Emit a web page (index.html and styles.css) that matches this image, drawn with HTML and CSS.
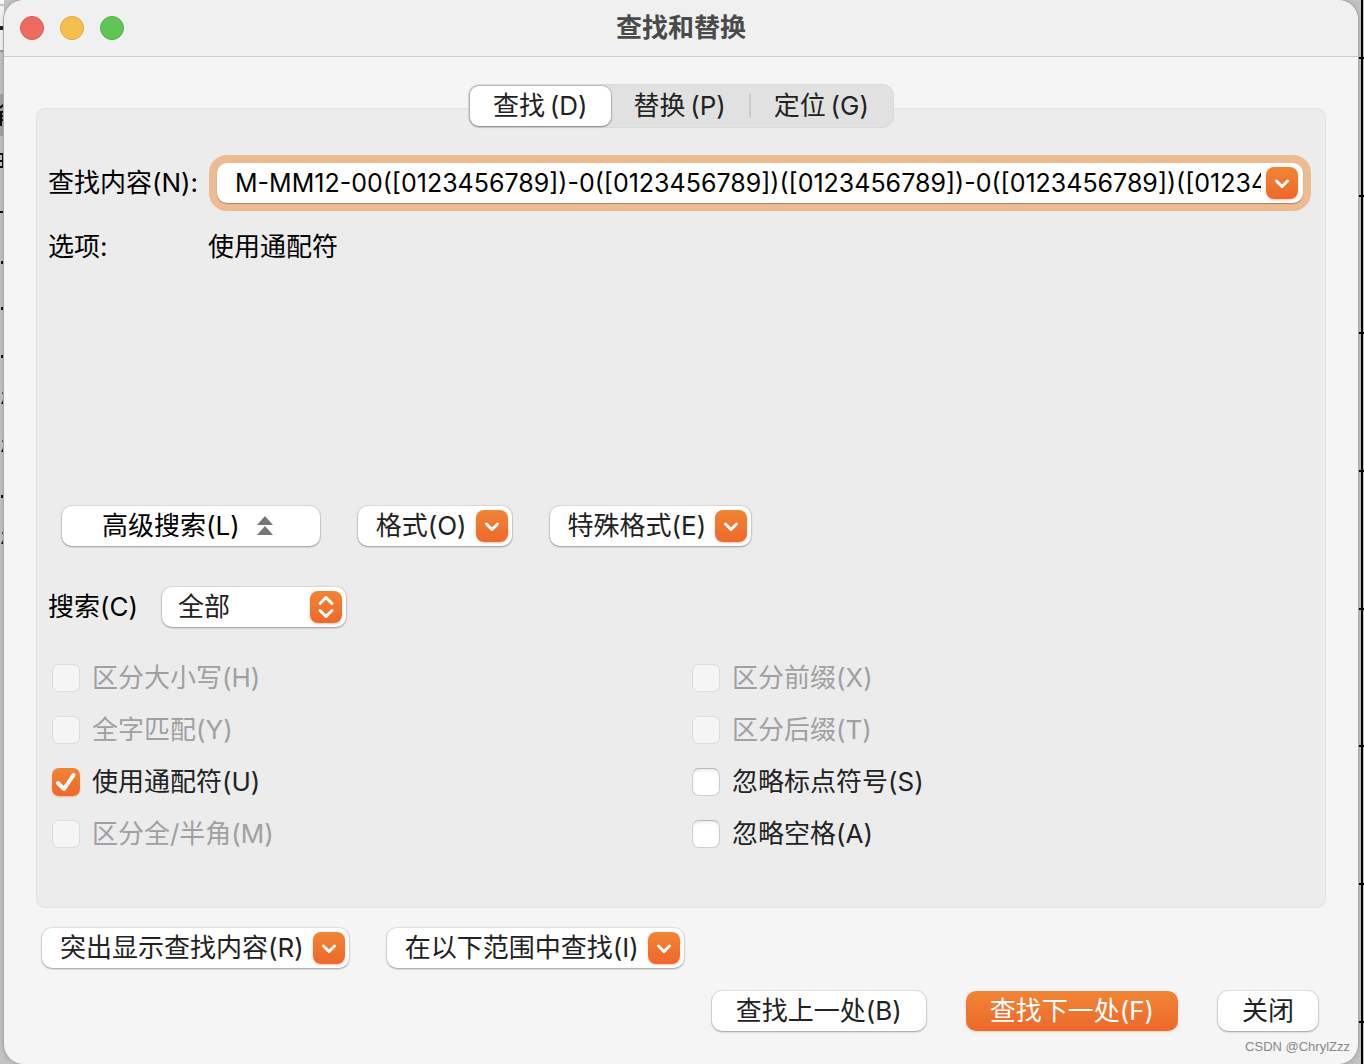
FILE: index.html
```html
<!DOCTYPE html>
<html lang="zh-CN">
    <head>
        <meta charset="UTF-8">
        <meta name="viewport" content="width=device-width, initial-scale=1.0">
        <title>查找和替换</title>
        <link rel="stylesheet" href="styles.css">
    </head>
    <body>
        <!-- Document behind the dialog -->
        <svg class="doc doc-left" width="4" height="1064" aria-hidden="true">
            <rect width="4" height="52" fill="#f4f4f4"/>
            <rect y="4" width="4" height="2" fill="#c8c8c8"/>
            <rect y="26" width="4" height="4" fill="#222"/>
            <rect y="50" width="4" height="2" fill="#999"/>
            <rect y="94" width="4" height="42" fill="#a3a3a3"/>
            <path d="M0 108l3-3M0 112h4M0 116h4M1 112v14M0 120h4M0 154h4M0 161h4M0 167h4M3 154v13M0 212h4" stroke="#111" stroke-width="2" fill="none"/>
            <path d="M1 261h3v3h-3zM1 307h3v3h-3zM1 355h3v3h-3zM1 495h3v3h-3zM4 388v6h-2zM4 398v6h-3zM4 436v6h-2zM4 446v6h-3zM4 528v6h-2zM4 538v6h-3z" fill="#111"/>
        </svg>
        <svg class="doc doc-right" width="6" height="1064" aria-hidden="true">
            <path d="M4 0v1064" stroke="#000" stroke-width="2"/>
            <path d="M0 58h6M0 196h6M0 333h6M0 471h6M0 609h6M0 746h6M0 884h6M0 1022h6" stroke="#000" stroke-width="2"/>
        </svg>

        <main class="dialog">
            <header class="titlebar">
                <div class="lights">
                    <button class="light red" aria-label="关闭窗口"></button>
                    <button class="light yellow" aria-label="最小化"></button>
                    <button class="light green" aria-label="缩放"></button>
                </div>
                <h1>查找和替换</h1>
            </header>

            <div class="content">
                <nav class="tabs" role="tablist">
                    <button class="tab active" role="tab" aria-selected="true">查找&thinsp;(D)</button>
                    <button class="tab" role="tab" aria-selected="false">替换&thinsp;(P)</button>
                    <span class="divider"></span>
                    <button class="tab" role="tab" aria-selected="false">定位&thinsp;(G)</button>
                </nav>

                <section class="panel">
                    <div class="row">
                        <label for="find">查找内容(N):</label>
                        <div class="combo">
                            <input id="find" type="text" value="M-MM12-00([0123456789])-0([0123456789])([0123456789])-0([0123456789])([0123456789])">
                            <button class="badge" aria-label="历史记录">
                                <svg width="32" height="32" viewBox="0 0 32 32"><path d="M10.5 14l5.5 5.5 5.5-5.500"/></svg>
                            </button>
                        </div>
                    </div>
                    <div class="row options">
                        <span>选项:</span>
                        <span>使用通配符</span>
                    </div>

                    <div class="buttons tools">
                        <button class="btn advanced">高级搜索(L)
                            <svg width="16" height="20" viewBox="0 0 16 20"><path d="M8 0l8 9H0zM8 10l8 9H0z" fill="#777"/></svg>
                        </button>
                        <button class="btn menu">格式(O)
                            <span class="badge"><svg width="32" height="32" viewBox="0 0 32 32"><path d="M10.5 14l5.5 5.5 5.5-5.5"/></svg></span>
                        </button>
                        <button class="btn menu">特殊格式(E)
                            <span class="badge"><svg width="32" height="32" viewBox="0 0 32 32"><path d="M10.5 14l5.5 5.5 5.5-5.5"/></svg></span>
                        </button>
                    </div>

                    <div class="scope">
                        <label for="scope">搜索(C)</label>
                        <div class="select">
                            <select id="scope">
                                <option>全部</option>
                            </select>
                            <span class="badge"><svg width="32" height="32" viewBox="0 0 32 32"><path d="M10 12.5l6-6 6 6M10 19.5l6 6 6-6"/></svg></span>
                        </div>
                    </div>

                    <div class="checks">
                        <label><input type="checkbox" disabled>区分大小写(H)</label>
                        <label><input type="checkbox" disabled>区分前缀(X)</label>
                        <label><input type="checkbox" disabled>全字匹配(Y)</label>
                        <label><input type="checkbox" disabled>区分后缀(T)</label>
                        <label><input type="checkbox" checked>使用通配符(U)
                            <svg class="tick" width="28" height="28" viewBox="0 0 28 28"><path d="M6 15l6 6L21.5 7"/></svg>
                        </label>
                        <label><input type="checkbox">忽略标点符号(S)</label>
                        <label><input type="checkbox" disabled>区分全/半角(M)</label>
                        <label><input type="checkbox">忽略空格(A)</label>
                    </div>
                </section>

                <div class="buttons extra">
                    <button class="btn menu">突出显示查找内容(R)
                        <span class="badge"><svg width="32" height="32" viewBox="0 0 32 32"><path d="M10.5 14l5.5 5.5 5.5-5.5"/></svg></span>
                    </button>
                    <button class="btn menu">在以下范围中查找(I)
                        <span class="badge"><svg width="32" height="32" viewBox="0 0 32 32"><path d="M10.5 14l5.5 5.5 5.5-5.5"/></svg></span>
                    </button>
                </div>

                <footer class="buttons actions">
                    <button class="btn">查找上一处(B)</button>
                    <button class="btn primary">查找下一处(F)</button>
                    <button class="btn">关闭</button>
                </footer>
            </div>
        </main>
        <p class="credit">CSDN @ChrylZzz</p>
    </body>
</html>
```
FILE: styles.css
```css
* {
    box-sizing: border-box;
}

body {
    position: relative;
    margin: 0;
    min-height: 100vh;
    padding: 0 6px 0 4px;
    background: #c4c4c4;
    font-family: Inter, "Noto Sans CJK SC", sans-serif;
    font-size: 26px;
    line-height: 32px;
    color: #000;
    overflow: hidden;
}

button, input, select {
    margin: 0;
    padding: 0;
    border: none;
    font: inherit;
    color: #222;
}

.doc {
    position: absolute;
    top: 0;
}

.doc-left {
    left: 0;
}

.doc-right {
    right: 0;
}

.dialog {
    position: relative;
    min-height: 100vh;
    border-radius: 20px;
    background: #f5f5f5;
    box-shadow: 0 0 0 1px #a8a8a8, 0 0 6px rgba(0,0,0,0.2);
    overflow: hidden;
}

.titlebar {
    position: relative;
    display: flex;
    align-items: center;
    justify-content: center;
    height: 57px;
    border-bottom: 1px solid #cdcdcd;
    background: #f0f0f0;
}

.titlebar h1 {
    margin: 0;
    font-size: 26px;
    font-weight: bold;
    color: #4a4a4a;
}

.lights {
    position: absolute;
    left: 16px;
    top: 16px;
    display: flex;
    gap: 16px;
}

.light {
    width: 24px;
    height: 24px;
    border-radius: 50%;
}

.red {
    background: #ed6a5f;
    border: 1px solid #d85a50;
}

.yellow {
    background: #f5bf4f;
    border: 1px solid #dba73f;
}

.green {
    background: #61c555;
    border: 1px solid #50ad44;
}

.content {
    display: flex;
    flex-direction: column;
    padding: 27px 32px;
}

/* Tabs sit across the top edge of the panel */
.tabs {
    z-index: 1;
    display: flex;
    align-items: center;
    align-self: center;
    height: 44px;
    margin-bottom: -20px;
    padding: 1px;
    border: 1px solid #dadada;
    border-radius: 11px;
    background: #e1e1e1;
}

.tab {
    height: 40px;
    padding: 0 23px;
    border-radius: 9px;
    background: none;
}

.tab.active {
    background: #fff;
    box-shadow: 0 0 1px 1px rgba(0,0,0,0.15), 0 1px 2px rgba(0,0,0,0.3);
}

.divider {
    width: 2px;
    height: 24px;
    background: #cbcbcb;
}

.panel {
    padding: 54px 12px 47px 11px;
    border: 1px solid #e2e2e2;
    border-radius: 9px;
    background: #ececec;
}

.row {
    display: grid;
    grid-template-columns: 160px 1fr;
    align-items: center;
}

.combo {
    display: flex;
    align-items: center;
    height: 40px;
    margin: 0 10px 0 9px;
    padding: 0 5px 0 18px;
    border-radius: 10px;
    background: #fff;
    box-shadow: 0 1px 1px rgba(0,0,0,0.3), 0 0 0 8px #edbb92;
}

.combo input {
    flex: 1;
    min-width: 0;
    height: 36px;
    margin-right: 5px;
    background: none;
    outline: none;
    font-size: 25px;
    color: #000;
}

.badge {
    flex: none;
    width: 32px;
    height: 32px;
    border-radius: 8px;
    background: linear-gradient(#f08535, #ee682b);
    box-shadow: 0 1px 2px rgba(238,104,43,0.4);
}

.badge svg {
    display: block;
    fill: none;
    stroke: #fff;
    stroke-width: 3;
    stroke-linecap: round;
    stroke-linejoin: round;
}

.options {
    margin-top: 28px;
}

.buttons {
    display: flex;
}

.btn {
    display: flex;
    align-items: center;
    height: 40px;
    padding: 0 24px;
    border-radius: 10px;
    background: #fff;
    box-shadow: 0 0 1px 1px rgba(0,0,0,0.08), 0 1px 2px rgba(0,0,0,0.3);
    white-space: nowrap;
}

.menu {
    gap: 9px;
    padding: 0 4px 0 18px;
}

.tools {
    gap: 38px;
    margin-top: 243px;
    padding-left: 14px;
}

.advanced {
    gap: 17px;
    padding: 0 47px 0 40px;
    color: #000;
}

.primary {
    background: linear-gradient(#f08535, #ee682b);
    box-shadow: 0 1px 2px rgba(0,0,0,0.15);
    color: #fff;
}

.scope {
    display: flex;
    align-items: center;
    gap: 24px;
    margin-top: 41px;
}

.select {
    position: relative;
    width: 184px;
    height: 40px;
}

.select select {
    appearance: none;
    width: 100%;
    height: 40px;
    padding-left: 16px;
    border-radius: 10px;
    background: #fff;
    box-shadow: 0 0 1px 1px rgba(0,0,0,0.08), 0 1px 2px rgba(0,0,0,0.3);
}

.select .badge {
    position: absolute;
    right: 4px;
    top: 4px;
    pointer-events: none;
}

.checks {
    display: grid;
    grid-template-columns: 640px 1fr;
    grid-auto-rows: 52px;
    align-items: center;
    margin-top: 25px;
    padding-left: 4px;
    color: #222;
}

.checks label {
    position: relative;
    display: flex;
    align-items: center;
    gap: 12px;
}

.checks label:has(input:disabled) {
    color: #a0a0a2;
}

.checks input {
    appearance: none;
    width: 28px;
    height: 28px;
    border: 1px solid #cfcfcf;
    border-top-color: #b8b8b8;
    border-radius: 7px;
    background: #fff;
    box-shadow: inset 0 2px 3px rgba(0,0,0,0.08);
}

.checks input:disabled {
    border-color: #dcdcdc;
    background: #f5f5f5;
    box-shadow: none;
}

.checks input:checked {
    border: none;
    background: linear-gradient(#f08535, #ee682b);
    box-shadow: 0 1px 2px rgba(238,104,43,0.4);
}

.tick {
    position: absolute;
    left: 0;
    fill: none;
    stroke: #fff;
    stroke-width: 4;
    stroke-linecap: round;
    stroke-linejoin: round;
}

.extra {
    gap: 38px;
    margin-top: 20px;
    padding-left: 6px;
}

.actions {
    justify-content: flex-end;
    gap: 40px;
    margin-top: 23px;
    padding-right: 8px;
}

.credit {
    position: absolute;
    right: 14px;
    bottom: 8px;
    margin: 0;
    font-family: "Liberation Sans", sans-serif;
    font-size: 13px;
    line-height: 18px;
    color: #888;
}
```
